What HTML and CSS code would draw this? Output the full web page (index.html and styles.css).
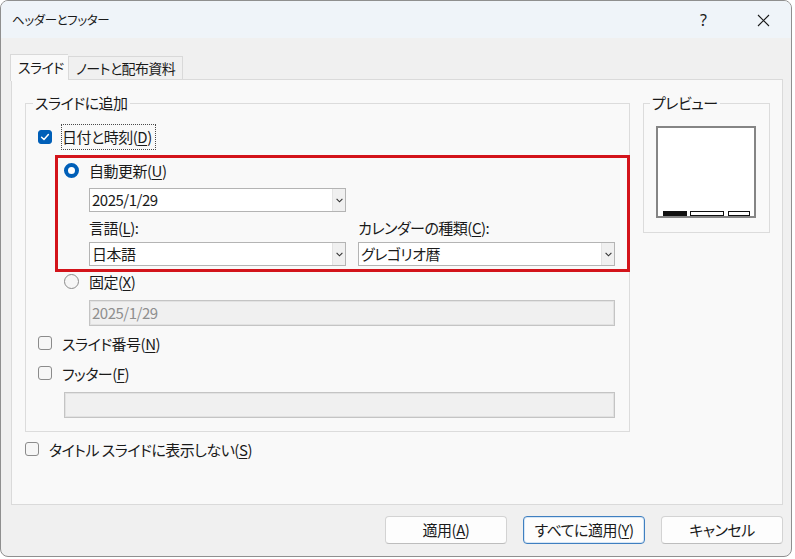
FILE: index.html
```html
<!DOCTYPE html>
<html lang="ja">
<head>
<meta charset="utf-8">
<title>ヘッダーとフッター</title>
<link rel="stylesheet" href="styles.css">
</head>
<body>
<div class="window">
  <div class="titlebar">
    <span class="title">ヘッダーとフッター</span>
    <span class="help">?</span>
    <span class="close"><svg width="13" height="13" viewBox="0 0 13 13"><path d="M1 1 L12 12 M12 1 L1 12" stroke="#1b1b1b" stroke-width="1.1" fill="none"/></svg></span>
  </div>
  <div class="tabs">
    <div class="tab active">スライド</div>
    <div class="tab">ノートと配布資料</div>
  </div>
  <div class="panel">
    <div class="left">
      <div class="group">
        <div class="group-title main-title">スライドに追加</div>
        <div class="row row-date">
          <span class="cb checked"><svg width="14" height="14" viewBox="0 0 14 14"><path d="M3.6 7.2 L6 9.5 L10.4 4.6" stroke="#fff" stroke-width="1.5" fill="none" stroke-linecap="round" stroke-linejoin="round"/></svg></span>
          <span class="focus">日付と時刻(<u>D</u>)</span>
        </div>
        <div class="auto">
          <div class="row radio-row"><span class="radio on"></span><span>自動更新(<u>U</u>)</span></div>
          <div class="select s-first"><span class="val">2025/1/29</span><span class="drop"><svg width="7" height="5" viewBox="0 0 7 5"><path d="M0.6 0.8 L3.5 3.8 L6.4 0.8" stroke="#333" stroke-width="1.1" fill="none"/></svg></span></div>
          <div class="grid2">
            <div class="lbl">言語(<u>L</u>):</div>
            <div class="lbl">カレンダーの種類(<u>C</u>):</div>
            <div class="select"><span class="val">日本語</span><span class="drop"><svg width="7" height="5" viewBox="0 0 7 5"><path d="M0.6 0.8 L3.5 3.8 L6.4 0.8" stroke="#333" stroke-width="1.1" fill="none"/></svg></span></div>
            <div class="select"><span class="val">グレゴリオ暦</span><span class="drop"><svg width="7" height="5" viewBox="0 0 7 5"><path d="M0.6 0.8 L3.5 3.8 L6.4 0.8" stroke="#333" stroke-width="1.1" fill="none"/></svg></span></div>
          </div>
          <div class="annot"></div>
        </div>
        <div class="fixed">
          <div class="row radio-row fixed-row"><span class="radio"></span><span>固定(<u>X</u>)</span></div>
          <div class="input disabled fixed-input">2025/1/29</div>
        </div>
        <div class="row cb-row num-row"><span class="cb"></span><span>スライド番号(<u>N</u>)</span></div>
        <div class="row cb-row footer-row"><span class="cb"></span><span>フッター(<u>F</u>)</span></div>
        <div class="input disabled footer-input"></div>
      </div>
      <div class="row cb-row title-row"><span class="cb"></span><span>タイトル スライドに表示しない(<u>S</u>)</span></div>
    </div>
    <div class="preview-group">
      <div class="group-title">プレビュー</div>
      <div class="preview">
        <span class="bar fill w1"></span>
        <span class="bar w2"></span>
        <span class="bar w3"></span>
      </div>
    </div>
  </div>
  <div class="buttons">
    <button class="btn">適用(<u>A</u>)</button>
    <button class="btn default">すべてに適用(<u>Y</u>)</button>
    <button class="btn">キャンセル</button>
  </div>
</div>
</body>
</html>
```

FILE: styles.css
```css
* { box-sizing: border-box; }
html, body { margin: 0; padding: 0; background: #ffffff; }
body {
  font-family: "Noto Sans CJK JP", "Noto Sans", sans-serif;
  font-feature-settings: "palt";
  font-size: 15px;
  letter-spacing: -0.5px;
  color: #1a1a1a;
  white-space: nowrap;
}
u { text-decoration: underline; text-underline-offset: 2px; text-decoration-thickness: 1px; }

.window {
  width: 792px;
  height: 557px;
  border: 1px solid #8f8f8f;
  border-radius: 8px;
  overflow: hidden;
  background: #f0f0f0;
}

.titlebar {
  height: 37px;
  background: #eff4f9;
  display: flex;
  align-items: center;
  padding-left: 11px;
}
.title {
  font-size: 12.5px;
  letter-spacing: -0.4px;
  line-height: 16px;
  flex: 1;
  padding-top: 1px;
}
.help {
  font-family: "Noto Sans", sans-serif;
  font-size: 16px;
  letter-spacing: 0;
  line-height: 18px;
  width: 12px;
  margin-right: 45px;
}
.close {
  display: flex;
  width: 13px;
  height: 13px;
  margin-right: 21px;
  margin-top: 1px;
}

.tabs {
  display: flex;
  align-items: flex-end;
  margin: 15px 0 0 9px;
  height: 27px;
  position: relative;
  z-index: 1;
}
.tab {
  height: 23px;
  line-height: 22px;
  padding: 0 0 0 7px;
  width: 115px;
  font-size: 14px;
  letter-spacing: -0.6px;
  background: #f0f0f0;
  border: 1px solid #d9d9d9;
  border-bottom: none;
  margin-bottom: 1px;
}
.tab.active {
  width: 58px;
  height: 27px;
  line-height: 24px;
  background: #f9f9f9;
  border-color: #d9d9d9;
  margin-bottom: -1px;
  border-right: none;
}

.panel {
  margin: -1px 0 0 10px;
  width: 772px;
  height: 426px;
  background: #f9f9f9;
  border: 1px solid #dadada;
  padding: 23px 12px 0 13px;
  display: flex;
  align-items: flex-start;
}
.left { width: 605px; }

.group {
  border: 1px solid #dcdcdc;
  padding: 0 13px 13px 12px;
}
.group-title {
  margin: -10px 0 0 7px;
  padding: 0 2px;
  line-height: 18px;
  height: 18px;
  background: #f9f9f9;
  width: fit-content;
}
.group-title.main-title { margin-left: -5px; }

.row {
  display: flex;
  align-items: center;
  height: 20px;
}

.cb {
  width: 14px;
  height: 14px;
  border: 1px solid #8b8b8b;
  border-radius: 3px;
  background: #f6f6f6;
  flex: none;
  display: flex;
}
.cb.checked {
  background: #005fb8;
  border-color: #005fb8;
}
.cb.checked svg { margin: -1px; }
.cb-row { gap: 10px; }

.row-date {
  margin-top: 12px;
  height: 26px;
}
.focus {
  margin-left: 9px;
  border: 1px dotted #4a4a4a;
  height: 26px;
  line-height: 23px;
  padding: 0 3px 0 0;
}

.auto {
  position: relative;
  margin-left: 26px;
}
.radio-row { gap: 10px; margin-top: 10px; }
.radio {
  width: 15px;
  height: 15px;
  border-radius: 50%;
  border: 1px solid #8b8b8b;
  background: #f6f6f6;
  flex: none;
}
.radio.on {
  border: 4.5px solid #005fb8;
  background: #ffffff;
}

.select {
  height: 24px;
  background: #ffffff;
  border: 1px solid #b4b4b4;
  display: flex;
  align-items: center;
  padding-left: 2px;
}
.select .val { flex: 1; line-height: 20px; }
.select .drop {
  width: 13px;
  height: 22px;
  background: #f0f0f0;
  border-left: 1px solid #e3e3e3;
  display: flex;
  align-items: center;
  justify-content: center;
  padding-top: 1px;
}
.s-first {
  margin: 8px 0 0 25px;
  width: 257px;
}
.grid2 {
  margin: 8px 0 0 25px;
  display: grid;
  grid-template-columns: 257px 257px;
  column-gap: 12px;
  row-gap: 6px;
}
.lbl { line-height: 16px; height: 16px; }

.annot {
  position: absolute;
  left: -9px;
  top: -5px;
  right: -14px;
  bottom: -6px;
  border: 3px solid #d3141b;
  pointer-events: none;
}

.fixed { margin-left: 26px; }
.fixed-row { margin-top: 5px; }
.input {
  height: 26px;
  border: 1px solid #c4c4c4;
  background: #ffffff;
  line-height: 23px;
  padding-left: 2px;
}
.input.disabled {
  background: #f0f0f0;
  color: #8e8e8e;
  box-shadow: inset 0 0 0 1px #e2e2e2;
}
.fixed-input {
  margin: 9px 0 0 25px;
  width: 526px;
}

.num-row { margin-top: 7px; }
.footer-row { margin-top: 10px; }
.footer-input {
  margin: 9px 0 0 26px;
  width: 551px;
}

.title-row { margin-top: 7px; }

.preview-group {
  margin-left: 13px;
  width: 127px;
  height: 130px;
  border: 1px solid #dcdcdc;
}
.preview-group .group-title { margin-left: 6px; }
.preview {
  margin: 14px 0 0 12px;
  width: 100px;
  height: 92px;
  border: 2px solid #858585;
  background: #ffffff;
  display: flex;
  align-items: flex-end;
  padding: 0 0 0 5px;
  gap: 3px;
}
.bar {
  height: 5px;
  border: 1px solid #111;
  background: #fff;
}
.bar.fill { background: #111; }
.w1 { width: 24px; }
.w2 { width: 34px; }
.w3 { width: 22px; margin-left: 1px; }

.buttons {
  display: flex;
  justify-content: flex-end;
  gap: 16px;
  margin-top: 11px;
  padding-right: 8px;
}
.btn {
  width: 122px;
  height: 28px;
  font-family: "Noto Sans CJK JP", "Noto Sans", sans-serif;
  font-feature-settings: "palt";
  font-size: 15px;
  letter-spacing: -0.5px;
  color: #1a1a1a;
  background: #fdfdfd;
  border: 1px solid #d3d3d3;
  border-bottom-color: #bdbdbd;
  border-radius: 4px;
  padding: 0;
  line-height: 24px;
}
.btn.default {
  border: 1px solid #3f7fc0;
  box-shadow: inset 0 0 0 1px #d6e6f5;
}
```
